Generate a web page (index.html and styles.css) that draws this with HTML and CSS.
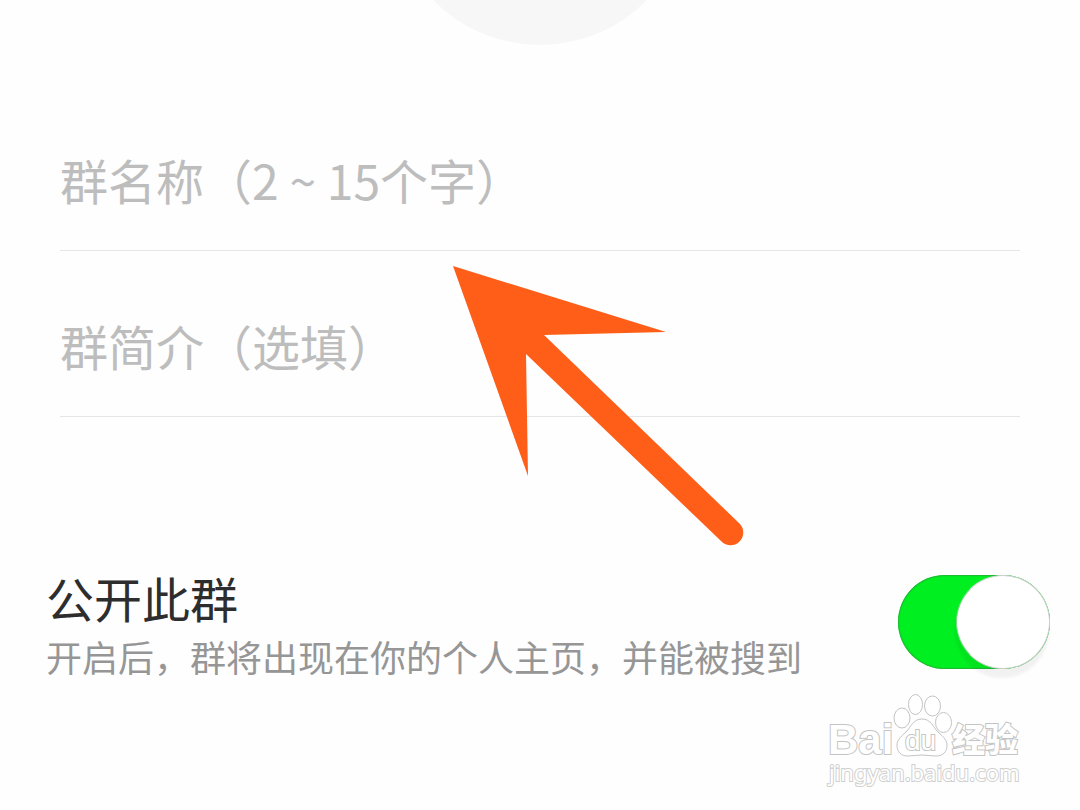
FILE: index.html
```html
<!DOCTYPE html>
<html lang="zh-CN">
<head>
<meta charset="utf-8">
<meta name="viewport" content="width=device-width, initial-scale=1">
<title>创建群</title>
<link rel="stylesheet" href="styles.css">
</head>
<body>
<main class="page">
  <div class="avatar-area"><div class="avatar"></div></div>
  <form class="form">
    <div class="fields">
      <div class="field"><input class="field-input" type="text" aria-label="群名称" placeholder="群名称（2 ~ 15个字）"></div>
      <div class="field"><input class="field-input" type="text" aria-label="群简介" placeholder="群简介（选填）"></div>
    </div>
    <div class="setting">
      <div class="setting-text">
        <label class="setting-title" for="public">公开此群</label>
        <p class="setting-note" id="note">开启后，群将出现在你的个人主页，并能被搜到</p>
      </div>
      <input class="switch" type="checkbox" id="public" aria-describedby="note" checked>
    </div>
  </form>
  <footer class="footer">
    <svg class="watermark" viewBox="0 0 200 100" role="img" aria-label="Baidu 经验">
      <g class="outline">
        <text class="brand" x="3" y="64">Bai</text>
        <ellipse cx="77" cy="28" rx="8" ry="10"/>
        <ellipse cx="90.500" cy="14.500" rx="7" ry="10"/>
        <ellipse cx="107.500" cy="16" rx="8" ry="10"/>
        <ellipse cx="118.500" cy="32.500" rx="8" ry="10"/>
        <path d="M97 29c-9 0-11 8-16 13-6 5-9 9-9 13 0 7 4 11 11 11 5 0 9-1 14-1s9 1 14 1c7 0 11-4 11-11 0-4-3-8-9-13-5-5-7-13-16-13Z"/>
        <text class="du" x="80" y="60">du</text>
        <text class="cjk" x="127" y="62">经验</text>
        <text class="url" x="4" y="91">jingyan.baidu.com</text>
      </g>
    </svg>
  </footer>
  <svg class="arrow" viewBox="0 0 292 282" aria-hidden="true">
    <path d="M0 1 213 67 91 70 287 259A12.500 12.500 0 0 1 268 276L73 89 75 211Z"/>
  </svg>
</main>
</body>
</html>
```
FILE: styles.css
```css
*, *::before { box-sizing: border-box; }

body {
  margin: 0;
  background: #fefefe;
  font-family: "Noto Sans CJK SC", sans-serif;
}

.page { position: relative; }

.avatar-area {
  display: flex;
  justify-content: center;
  align-items: flex-end;
  height: 45px;
  overflow: hidden;
}

.avatar {
  flex: none;
  width: 300px;
  height: 300px;
  border-radius: 50%;
  background: #f7f7f7;
}

.fields { padding: 40px 60px 0; }

.field {
  padding: 58px 0 35px;
  border-bottom: 1px solid #e6e6e6;
}

.field-input {
  display: block;
  width: 100%;
  height: 72px;
  padding: 0;
  border: 0;
  outline: 0;
  background: transparent;
  color: #2d2d2d;
  font: inherit;
  font-size: 48px;
}

.field-input::placeholder { color: #bdbdbd; opacity: 1; }

.setting {
  display: flex;
  justify-content: space-between;
  align-items: center;
  gap: 24px;
  padding: 148px 30px 0 46px;
}

.setting-title {
  display: block;
  color: #2d2d2d;
  font-size: 48px;
  line-height: 64px;
}

.setting-note {
  margin: 0;
  color: #969696;
  font-size: 36px;
  line-height: 54px;
}

.switch {
  appearance: none;
  flex: none;
  display: flex;
  justify-content: flex-end;
  width: 152px;
  height: 94px;
  margin: 0 0 4px;
  border-radius: 47px;
  background: #00ef20;
  box-shadow: inset 0 0 1px 1px #22b535;
}

.switch::before {
  content: "";
  width: 94px;
  height: 94px;
  border: 1px solid #d2d2d2;
  border-left-color: #7ed889;
  border-radius: 50%;
  background: #fff;
  box-shadow: -1px 9px 3px #0000000d;
}

.switch:not(:checked) { justify-content: flex-start; background: #ddd; box-shadow: none; }

.footer {
  display: flex;
  justify-content: flex-end;
  padding: 7px 55px 0 0;
}

.watermark { width: 200px; height: 100px; }

.outline {
  fill: #fff;
  stroke: #c4c4c4;
  stroke-width: 1px;
  font-family: "Liberation Sans", sans-serif;
}

.outline text { paint-order: stroke; stroke-width: 2px; }
.outline .brand { font-size: 42px; font-weight: bold; }
.outline .du { font-size: 28px; }
.outline .cjk { font-family: "Noto Sans CJK SC", sans-serif; font-size: 33px; font-weight: 900; }
.outline .url { font-family: "Noto Sans", sans-serif; font-size: 22px; stroke: #d0d0d0; }

.arrow {
  position: absolute;
  top: 265px;
  left: 453px;
  width: 292px;
  height: 282px;
  fill: #ff5e19;
  pointer-events: none;
}
```
